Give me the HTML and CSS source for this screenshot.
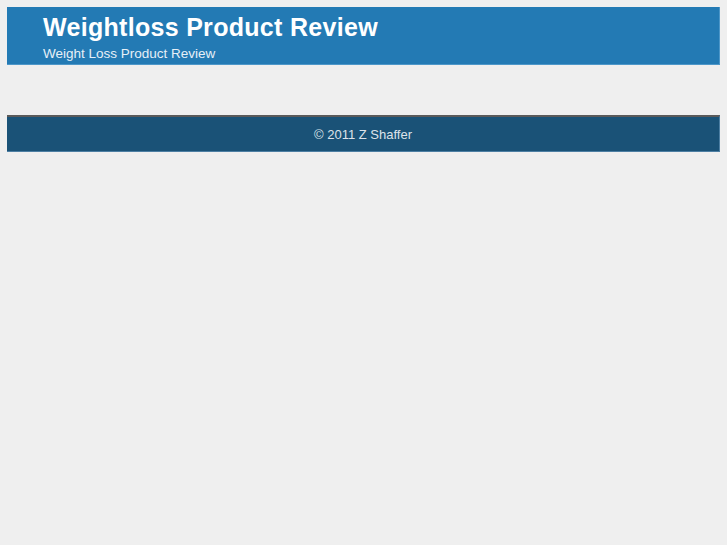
FILE: index.html
```html
<!DOCTYPE html>
<html lang="en">
<head>
    <meta charset="UTF-8">
    <title>Weightloss Product Review</title>
    <link rel="stylesheet" href="styles.css">
</head>
<body>
    <div class="header">
        <h1 class="site-title">Weightloss Product Review</h1>
        <p class="site-desc">Weight Loss Product Review</p>
    </div>
    <div class="content"></div>
    <div class="footer">
        <p>&copy; 2011 Z Shaffer</p>
    </div>
</body>
</html>
```
FILE: styles.css
```css
body {
    font-family: 'Liberation Sans', Arial, sans-serif;
    margin: 7px;
    background-color: #efefef;
}
.header {
    background-color: #237ab4;
    border-right: 1px solid #4d97c9;
    border-bottom: 1px solid #4d97c9;
    padding: 10px 36px 4px;
    height: 43px;
}
.site-title {
    margin: 0;
    font-size: 25px;
    line-height: 20px;
    letter-spacing: 0.3px;
    color: #fff;
}
.site-desc {
    margin: 9px 0 0;
    font-size: 13.5px;
    color: #e6eff7;
}
.content {
    height: 50px;
}
.footer {
    background-color: #1a5277;
    border-top: 2px solid #5a5a5a;
    border-right: 1px solid #4d7fa3;
    border-bottom: 1px solid #4d7fa3;
    height: 34px;
    display: flex;
    align-items: center;
    justify-content: center;
}
.footer p {
    margin: 0;
    font-size: 13px;
    color: #dde3ea;
}
```
